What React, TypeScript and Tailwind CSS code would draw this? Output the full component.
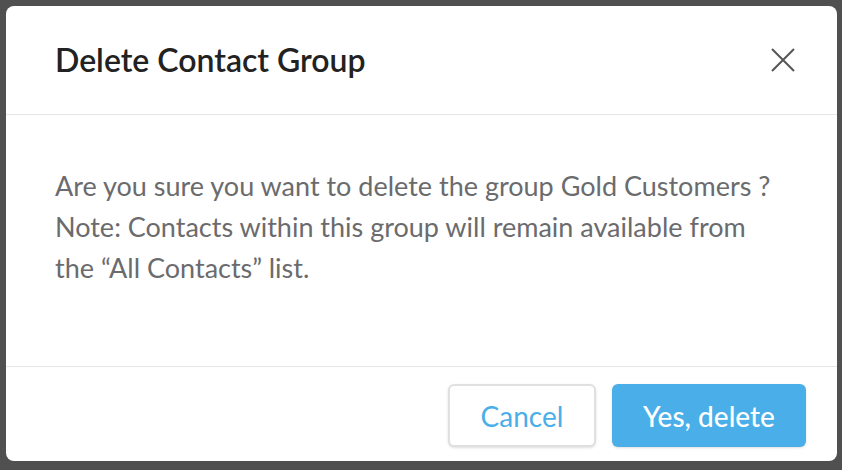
export default function App() {
  return (
    <div className="h-[470px] w-[842px] bg-[#505050] pt-[6px] pl-[6px] font-['Lato',sans-serif]">
      <div className="flex h-[455px] w-[831px] flex-col rounded-lg bg-white">
        <div className="flex h-[109px] items-center justify-between border-b border-[#e6e6e6] pl-[49px] pr-[42px]">
          <h1 className="text-[32px] font-semibold text-[#222]">Delete Contact Group</h1>
          <button className="flex h-[24px] w-[24px] items-center justify-center text-[#555]">
            <svg width="24" height="24" viewBox="0 0 24 24" fill="none" stroke="currentColor" strokeWidth="2">
              <path d="M1 1L23 23M23 1L1 23" />
            </svg>
          </button>
        </div>
        <div className="h-[252px] border-b border-[#e6e6e6] pl-[49px] pr-[20px] pt-[50px]">
          <p className="text-[27px] leading-[41px] text-[#6b6b6e]">
            Are you sure you want to delete the group Gold Customers ?<br />
            Note: Contacts within this group will remain available from<br />
            the “All Contacts” list.
          </p>
        </div>
        <div className="flex flex-1 items-start justify-end gap-4 pr-[31px] pt-[17px]">
          <button className="h-[63px] w-[148px] rounded-md border-2 border-[#e0e0e0] bg-white text-[28px] text-[#4aaee8] shadow-sm">
            Cancel
          </button>
          <button className="h-[63px] w-[194px] rounded-md bg-[#4aaee8] text-[28px] font-medium text-white shadow-sm">
            Yes, delete
          </button>
        </div>
      </div>
    </div>
  );
}
